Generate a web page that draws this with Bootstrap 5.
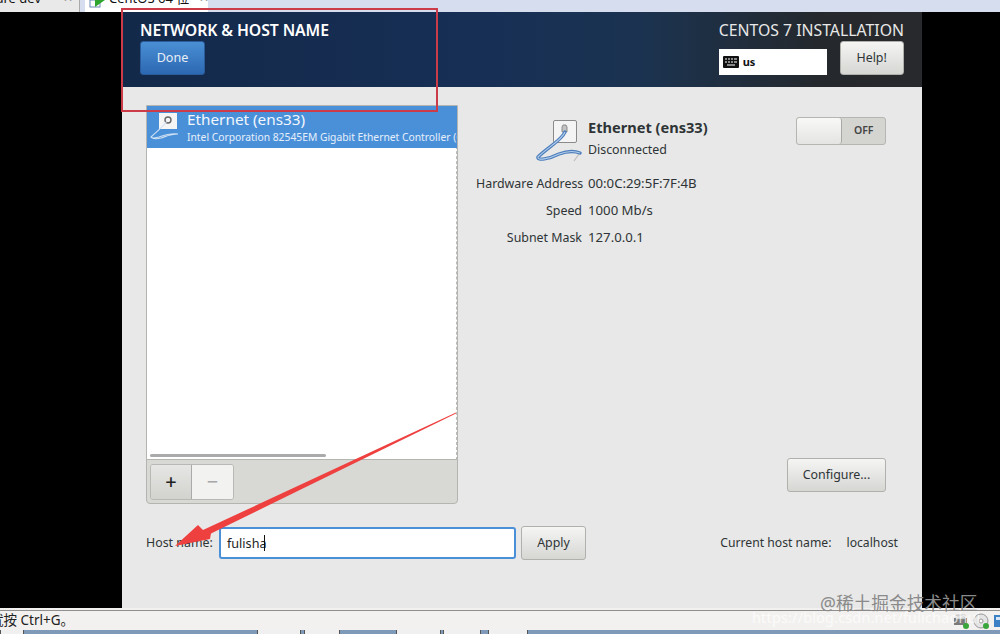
<!DOCTYPE html>
<html lang="en">
<head>
<meta charset="utf-8">
<title>Network &amp; Host Name</title>
<link href="https://cdn.jsdelivr.net/npm/bootstrap@5.3.0/dist/css/bootstrap.min.css" rel="stylesheet">
<style>
html,body{margin:0;height:634px;overflow:hidden;background:#000}
body{font-family:"Noto Sans","Noto Sans CJK SC",sans-serif;color:#2e3436;font-size:12.4px;position:relative;width:1000px}
.shot{height:634px;width:1000px}
.tabstrip{height:12px;background:#d5ddee;overflow:hidden;font-size:13px;color:#111;flex:none}
.tab-a{width:80px;background:#e9e9e9;border-right:1px solid #aaa;margin-right:5px;flex:none}
.tab-b{width:123px;background:#fff;flex:none}
.tab-a span,.tab-b span{margin-top:-11px;line-height:18px;white-space:nowrap}
.tab-a .tab-lbl{margin-left:-14px}
.tab-x{color:#999;font-size:12px}
.tab-a .tab-x{margin-right:6px}
.tab-b .tab-x{margin-left:10px}
.tab-ico{flex:none;margin-left:4px;margin-right:0}
.vm{height:596px;background:#000;flex:none}
.gutter-l{width:122px}
.gutter-r{width:78px}
.anaconda{width:800px;background:#e8e8e8}
.topbar{height:75px;flex:none;background:linear-gradient(90deg,#13294a 0%,#172f55 45%,#1b3350 65%,#25282c 88%,#28292c 100%);padding:9px 18px 0 18px;color:#fff}
.spoke-title{font-size:15.8px;font-weight:600;line-height:19px;letter-spacing:-.1px;white-space:nowrap}
.os-title{font-size:15.8px;line-height:19px;color:#e8e8e8;text-align:right;white-space:nowrap}
.btn-done{width:65px;height:34px;margin-top:1px;padding:0;font-size:12.6px;color:#e8eef6;background:linear-gradient(#4a8fd4,#2c68b2);border:1px solid #2a5c9c;border-radius:3px}
.btn-gray{padding:0;font-size:12.4px;color:#2e3436;background:linear-gradient(#f5f5f4,#d6d6d3);border:1px solid #b0b0ac;border-radius:3px}
.btn-help{width:64px;height:34px}
.head-row{margin-top:1px;gap:13px}
.kbd-box{width:108px;height:26px;background:#fff;color:#111;font-size:11px;font-weight:700;padding-left:4px;gap:4px}
.content{flex:1 1 auto}
.netlist{width:312px;height:399px;margin:18px 0 0 24px;border:1px solid #b4b4b0;border-radius:0 0 4px 4px;background:#d8d8d5;overflow:hidden}
.listbody{height:354px;background:#fff;border-right:1px dashed #bbb;border-bottom:1px solid #b4b4b0;position:relative}
.net-row{height:42px;background:#4a90d9;color:#f2f7fc;gap:4px;overflow:hidden;margin-right:-1px}
.net-name{font-size:15.3px;line-height:18px;margin-top:4px}
.net-sub{font-size:10.3px;line-height:15px;white-space:nowrap;color:#e6effa;margin-top:2px}
.hscroll{position:absolute;left:3px;bottom:2px;width:176px;height:3px;background:#aaa;border-radius:2px}
.listtools{padding:4px 3px}
.seg{width:84px;height:36px;border:1px solid #b8b8b4;border-radius:3px;overflow:hidden}
.seg-add{width:42px;background:linear-gradient(#e6e6e4,#d2d2cf);border-right:1px solid #aaa;font-size:20px;font-weight:500;color:#222;line-height:1}
.seg-rem{width:42px;background:#f2f2f1;font-size:20px;color:#a6a6a6;line-height:1}
.detail{width:464px;position:relative}
.detail-head{margin:33px 0 0 0;padding-left:77px;height:47px}
.d-text{margin-left:5px}
.d-title{font-size:14.6px;font-weight:700;line-height:18px;color:#2e3436;margin-top:-2px}
.d-sub{font-size:12.4px;line-height:18px;margin-top:5px}
.switchy{width:90px;height:28px;margin:-3px 36px 0 auto;background:#d4d4d1;border:1px solid #b5b5b1;border-radius:3px}
.knob{width:46px;background:linear-gradient(#f8f8f7,#e4e4e2);border-right:1px solid #a8a8a4;border-radius:3px;height:100%}
.off{width:43px;font-size:10.5px;font-weight:600;text-align:center;color:#444}
.props{display:grid;grid-template-columns:106px auto;column-gap:6px;row-gap:9px;margin:8px 0 0 18px;font-size:12.4px;line-height:18px;justify-content:start}
.props dt{font-weight:400;text-align:right;white-space:nowrap;margin:0}
.props dd{margin:0;font-size:13.2px;line-height:16px}
.btn-cfg{width:99px;height:34px;margin:211px 36px 0 0}
.hostrow{height:32px;padding:0 24px 0 24px;margin-top:23px}
.hostlabel{width:73px;flex:none}
.host-wrap{position:relative;width:297px;height:32px;flex:none}
.host-input{width:297px;height:32px;padding:0 6px;font-size:12.6px;line-height:28px;background:#fff;border:2px solid #4a90d9;border-radius:3px;color:#222}
.host-input:focus{box-shadow:none;border-color:#4a90d9}
.host-caret{position:absolute;left:45px;top:8px;width:1px;height:16px;background:#111}
.btn-apply{width:65px;height:34px;margin-left:5px}
.cur-name{margin-left:auto;font-size:12.2px;gap:15px}
.vmgap{height:2px;background:#f3f1ef;flex:none}
.statusbar{height:20px;flex:none;background:#f3f1ef;border-top:1px solid #8f8f8f}
.statustext{font-size:13.5px;color:#222;line-height:19px;white-space:nowrap;margin-left:-10px}
.tray{margin-left:auto;gap:4px}
.tray svg{flex:none}
.taskbar{height:4px;flex:none;background:#7f9ab8;align-items:stretch}
.tb-w{background:#f0f0f0;border-left:1px solid #555;border-right:1px solid #555}
.tb1{width:24px}.tb2{width:44px;margin-left:233px}.tb3{width:36px;margin-left:3px}.tb4{width:45px;margin-left:56px}.tb5{width:38px;margin-left:2px}.tb6{width:40px;margin-left:7px}
.overlay{position:absolute;left:0;top:0;pointer-events:none}
.redbox{position:absolute;left:121px;top:8px;width:317px;height:104px;border:2px solid #cc3c48;pointer-events:none}
.wm-cn{position:absolute;left:820px;top:592px;font-size:17.7px;line-height:22px;color:#8a8a8a;white-space:nowrap}
.wm-url{position:absolute;left:752px;top:609px;font-size:14.4px;line-height:18px;color:#fff;opacity:.7;white-space:nowrap;letter-spacing:.2px}
</style>
</head>
<body>
<div class="shot d-flex flex-column">
  <div class="tabstrip d-flex">
    <div class="tab-a d-flex align-items-start justify-content-between"><span class="tab-lbl">ware dev</span><span class="tab-x">✕</span></div>
    <div class="tab-b d-flex align-items-start">
      <svg width="20" height="12" viewBox="0 0 20 12" class="tab-ico"><rect x="1" y="0" width="10" height="7" fill="#fff" stroke="#6b88b5"/><path d="M6 0h10l-10 7z" fill="#2fa52f"/></svg>
      <span>CentOS 64 位</span><span class="tab-x">✕</span>
    </div>
  </div>
  <div class="vm d-flex">
    <div class="gutter-l"></div>
    <main class="anaconda d-flex flex-column">
      <header class="topbar d-flex justify-content-between">
        <div>
          <div class="spoke-title">NETWORK &amp; HOST NAME</div>
          <button type="button" class="btn btn-done">Done</button>
        </div>
        <div>
          <div class="os-title">CENTOS 7 INSTALLATION</div>
          <div class="head-row d-flex align-items-end">
            <div class="kbd-box d-flex align-items-center">
              <svg width="16" height="12" viewBox="0 0 16 12"><rect width="16" height="12" rx="1" fill="#111"/><path d="M2 3h2M5 3h2M8 3h2M11 3h3M2 6h2M5 6h2M8 6h2M11 6h3M4 9h8" stroke="#fff" stroke-width="1.2"/></svg>
              <span>us</span>
            </div>
            <button type="button" class="btn btn-gray btn-help">Help!</button>
          </div>
        </div>
      </header>
      <div class="content d-flex flex-column">
        <div class="d-flex">
          <section class="netlist flex-shrink-0">
            <div class="listbody">
              <div class="net-row d-flex">
                <svg width="36" height="40" viewBox="0 0 36 40" class="flex-shrink-0">
                  <rect x="12" y="7" width="18" height="16" fill="#f5f5f5"/>
                  <circle cx="21" cy="14" r="3" fill="none" stroke="#666" stroke-width="1.4"/>
                  <path d="M20 15C16 21 9 26 4 31c1 2 4 1 8 0 6-2 12-4 19-3-7 0-11 2-17 4-4 1-8 1-10-1" fill="none" stroke="#cfe0f3" stroke-width="1.1"/>
                </svg>
                <div class="overflow-hidden">
                  <div class="net-name">Ethernet (ens33)</div>
                  <div class="net-sub">Intel Corporation 82545EM Gigabit Ethernet Controller (Copper)</div>
                </div>
              </div>
              <div class="hscroll"></div>
            </div>
            <div class="listtools">
              <div class="seg d-flex">
                <div class="seg-add d-flex align-items-center justify-content-center">+</div>
                <div class="seg-rem d-flex align-items-center justify-content-center">−</div>
              </div>
            </div>
          </section>
          <section class="detail d-flex flex-column">
            <div class="detail-head d-flex">
              <svg width="48" height="46" viewBox="0 0 48 46" class="flex-shrink-0">
                <rect x="18.500" y="0.500" width="23" height="22" rx="1.500" fill="#f4f4f4" stroke="#8a8a8a"/>
                <path d="M27 7l1-2h3l1 2v5h-5z" fill="#c4c4c4" stroke="#777" stroke-width=".8"/>
                <path d="M44 34l-5 7" stroke="#bcbcbc" stroke-width="1.2"/>
                <path d="M30 12C27 20 12 28 3 37C2 41 14 39 24 34C32 31 40 31 45 33" fill="none" stroke="#4d7ebc" stroke-width="3.4" stroke-linecap="round"/>
                <path d="M30 12C27 20 12 28 3 37C2 41 14 39 24 34C32 31 40 31 45 33" fill="none" stroke="#b3cdeb" stroke-width="1.1"/>
              </svg>
              <div class="d-text">
                <div class="d-title">Ethernet (ens33)</div>
                <div class="d-sub">Disconnected</div>
              </div>
              <div class="switchy d-flex">
                <div class="knob"></div>
                <div class="off d-flex align-items-center justify-content-center">OFF</div>
              </div>
            </div>
            <dl class="props mb-0">
              <dt>Hardware Address</dt><dd>00:0C:29:5F:7F:4B</dd>
              <dt>Speed</dt><dd>1000 Mb/s</dd>
              <dt>Subnet Mask</dt><dd>127.0.0.1</dd>
            </dl>
            <button type="button" class="btn btn-gray btn-cfg align-self-end">Configure...</button>
          </section>
        </div>
        <div class="hostrow d-flex align-items-center">
          <label class="hostlabel" for="hostname">Host name:</label>
          <div class="host-wrap">
            <input id="hostname" class="form-control host-input" value="fulisha">
            <span class="host-caret"></span>
          </div>
          <button type="button" class="btn btn-gray btn-apply">Apply</button>
          <div class="cur-name d-flex"><span>Current host name:</span><span>localhost</span></div>
        </div>
      </div>
    </main>
    <div class="gutter-r"></div>
  </div>
  <div class="vmgap"></div>
  <footer class="statusbar d-flex align-items-center">
    <span class="statustext">就按 Ctrl+G。</span>
    <div class="tray d-flex">
      <svg width="16" height="16" viewBox="0 0 16 16"><rect x="1" y="5" width="13" height="7" fill="#7a7a7a"/><rect x="3" y="2" width="9" height="4" fill="#ddd" stroke="#999" stroke-width=".5"/><circle cx="13" cy="13" r="3" fill="#3aa53a"/></svg>
      <svg width="16" height="16" viewBox="0 0 16 16"><circle cx="8" cy="8" r="7" fill="#e4e4e4" stroke="#999"/><circle cx="8" cy="8" r="2" fill="#fff" stroke="#999"/><circle cx="13" cy="13" r="3" fill="#3aa53a"/></svg>
      <svg width="7" height="16" viewBox="0 0 7 16"><rect x="1" y="2" width="14" height="12" fill="#3b7fc4"/><rect x="3" y="4" width="10" height="3" fill="#d5e6f7"/></svg>
    </div>
  </footer>
  <div class="taskbar d-flex">
    <div class="tb-w tb1"></div><div class="tb-w tb2"></div><div class="tb-w tb3"></div><div class="tb-w tb4"></div><div class="tb-w tb5"></div><div class="tb-w tb6"></div>
  </div>
</div>
<svg class="overlay" width="1000" height="634" viewBox="0 0 1000 634">
  <path d="M456 412.600L456 413.400 211 533.500 210 539 175 546 198 525 203 530z" fill="#ef4040"/>
</svg>
<div class="redbox"></div>
<div class="wm-cn">@稀土掘金技术社区</div>
<div class="wm-url">https://blog.csdn.net/fulichaohui</div>
</body>
</html>
